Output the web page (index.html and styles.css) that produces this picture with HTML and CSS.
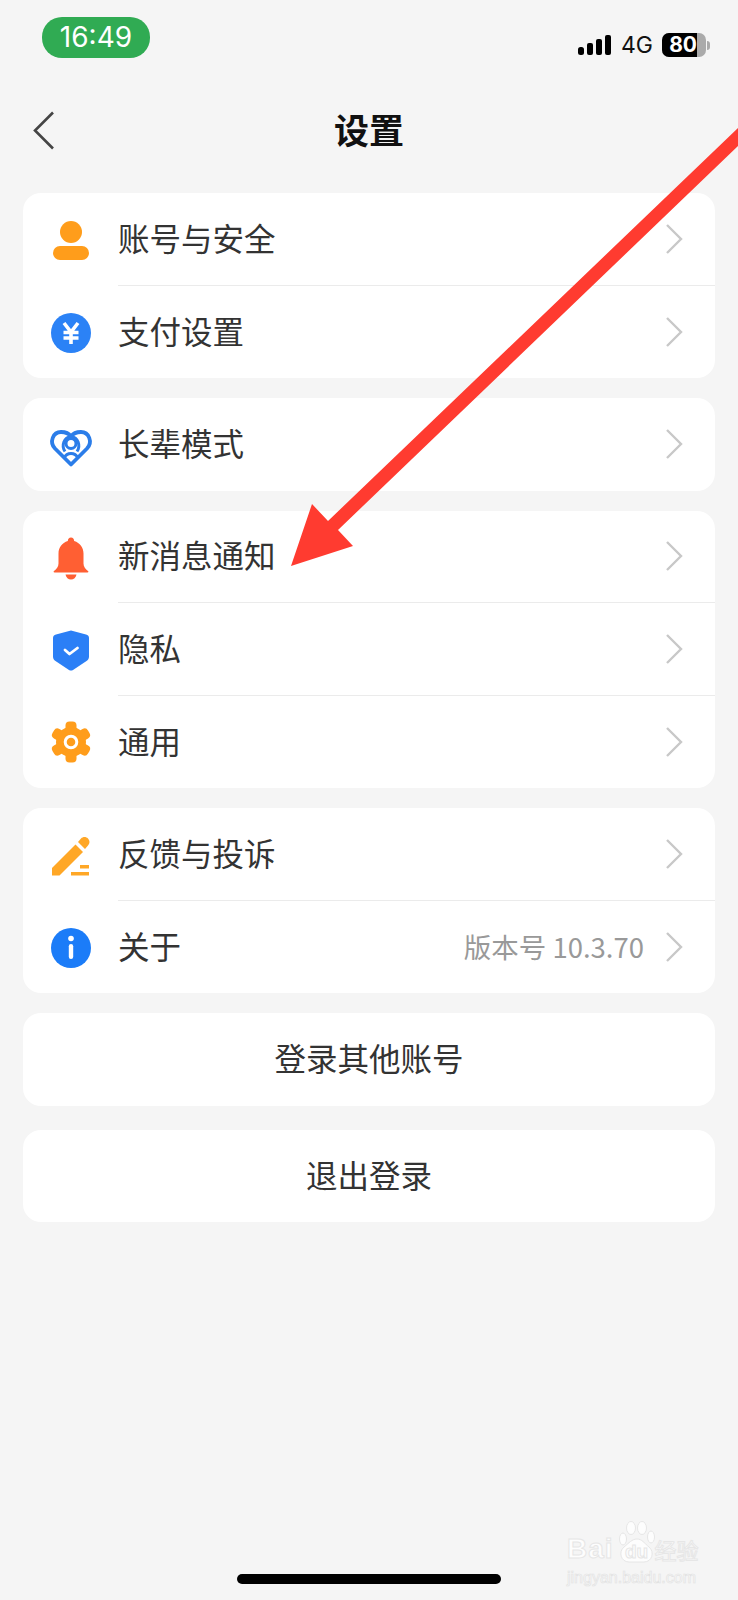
FILE: index.html
```html
<!DOCTYPE html>
<html lang="zh-CN">
<head>
    <meta charset="UTF-8">
    <meta name="viewport" content="width=device-width, initial-scale=1.0">
    <title>设置</title>
    <link rel="stylesheet" href="styles.css">
</head>
<body>

<div class="statusbar">
    <div class="clock">16:49</div>
    <div class="status-right">
        <svg class="signal" width="34" height="20" viewBox="0 0 34 20">
            <rect x="0" y="12" width="6" height="8" rx="2.5"/>
            <rect x="9" y="8" width="6" height="12" rx="2"/>
            <rect x="18" y="4" width="6" height="16" rx="2"/>
            <rect x="27" y="0" width="6" height="20" rx="2"/>
        </svg>
        <span class="net">4G</span>
        <div class="battery">
            <div class="battery-body"><div class="battery-fill">80</div></div>
            <div class="battery-nub"></div>
        </div>
    </div>
</div>

<div class="nav">
    <div class="back">
        <svg width="23" height="39" viewBox="0 0 23 39"><path d="M21 1.5 3 19.5l18 18" fill="none" stroke="#444" stroke-width="2.6"/></svg>
    </div>
    <div class="title">设置</div>
</div>

<div class="content">

    <div class="card">
        <div class="row">
            <svg class="icon" viewBox="0 0 48 48">
                <circle cx="24" cy="17" r="11" fill="#ff9d1b"/>
                <rect x="6" y="31" width="36" height="14" rx="7" fill="#ff9d1b"/>
            </svg>
            <div class="row-body"><span class="label">账号与安全</span><svg class="chev" viewBox="0 0 18 32"><path d="M2 2l14 14L2 30" /></svg></div>
        </div>
        <div class="row">
            <svg class="icon" viewBox="0 0 48 48">
                <circle cx="24" cy="25" r="20" fill="#2b82f6"/>
                <path d="M17 15 24 24l7-9M16.500 24.500h15M16.500 30h15M24 24v12" fill="none" stroke="#fff" stroke-width="3.600"/>
            </svg>
            <div class="row-body"><span class="label">支付设置</span><svg class="chev" viewBox="0 0 18 32"><path d="M2 2l14 14L2 30" /></svg></div>
        </div>
    </div>

    <div class="card">
        <div class="row">
            <svg class="icon" viewBox="0 0 48 48">
                <g fill="none" stroke="#2b7de9" stroke-width="3">
                    <path d="M24 44.500 8 28.500C2 22 6 12 14 12c4.500 0 8 1.500 10 4.500 2-3 5.500-4.500 10-4.500 8 0 12 10 6 16.500z" stroke-width="3.800" stroke-linejoin="round"/>
                    <circle cx="24" cy="23.500" r="5"/>
                    <path d="M24 16.500c-7 1-10 9-6 15M24 16.500c7 1 10 9 6 15M17 38c1.500-3 4-4.500 7-4.500s5.500 1.500 7 4.500"/>
                </g>
            </svg>
            <div class="row-body"><span class="label">长辈模式</span><svg class="chev" viewBox="0 0 18 32"><path d="M2 2l14 14L2 30" /></svg></div>
        </div>
    </div>

    <div class="card">
        <div class="row">
            <svg class="icon" viewBox="0 0 48 48">
                <path d="M24 4.500c2 0 3 1.500 3.200 3.500C33 10 36.500 14.500 36.500 20.500v10c0 3 2 5.500 4.500 7.500.8.700.4 1.500-.5 1.500h-33c-.9 0-1.300-.8-.5-1.500 2.500-2 4.500-4.500 4.500-7.500v-10c0-6 3.500-10.500 9.300-12.500C21 6 22 4.500 24 4.500z" fill="#ff5f33"/>
                <path d="M18.500 41.500h11c-.5 3-2.800 5-5.500 5s-5-2-5.500-5z" fill="#ff5f33"/>
            </svg>
            <div class="row-body"><span class="label">新消息通知</span><svg class="chev" viewBox="0 0 18 32"><path d="M2 2l14 14L2 30" /></svg></div>
        </div>
        <div class="row">
            <svg class="icon" viewBox="0 0 48 48">
                <path d="M24 5.500 39 9.500c2 .5 3 1.500 3 3.500V31.500c0 2-1 3.500-2.500 4.500L26 45c-1.300.8-2.700.8-4 0L8.500 36C7 35 6 33.500 6 31.500V13c0-2 1-3 3-3.500z" fill="#2b7ff6"/>
                <path d="M18 25l4.500 4 8-6" fill="none" stroke="#fff" stroke-width="2.800" stroke-linecap="round" stroke-linejoin="round"/>
            </svg>
            <div class="row-body"><span class="label">隐私</span><svg class="chev" viewBox="0 0 18 32"><path d="M2 2l14 14L2 30" /></svg></div>
        </div>
        <div class="row">
            <svg class="icon" viewBox="0 0 48 48">
                <circle cx="24" cy="24" r="15" fill="#ff9d1b"/>
                <g fill="#ff9d1b">
                    <rect x="18.500" y="3.500" width="11" height="41" rx="4"/>
                    <rect x="18.500" y="3.500" width="11" height="41" rx="4" transform="rotate(60 24 24)"/>
                    <rect x="18.500" y="3.500" width="11" height="41" rx="4" transform="rotate(120 24 24)"/>
                </g>
                <circle cx="24" cy="24" r="5.800" fill="#ff9d1b" stroke="#fff" stroke-width="3"/>
            </svg>
            <div class="row-body"><span class="label">通用</span><svg class="chev" viewBox="0 0 18 32"><path d="M2 2l14 14L2 30" /></svg></div>
        </div>
    </div>

    <div class="card">
        <div class="row">
            <svg class="icon" viewBox="0 0 48 48">
                <path d="M5 45.500V38L28.500 14.500l7.500 7.500L12.500 45.500z" fill="#ffa726"/>
                <path d="M31 12l3-3.500c2-2 5-2 7 0s2 5 0 7l-3 3.500z" fill="#ffa726"/>
                <rect x="33" y="35" width="9" height="3.500" fill="#ffa726"/>
                <rect x="24" y="42" width="18" height="3.500" fill="#ffa726"/>
            </svg>
            <div class="row-body"><span class="label">反馈与投诉</span><svg class="chev" viewBox="0 0 18 32"><path d="M2 2l14 14L2 30" /></svg></div>
        </div>
        <div class="row">
            <svg class="icon" viewBox="0 0 48 48">
                <circle cx="24" cy="25" r="20" fill="#1b7cf8"/>
                <circle cx="24" cy="15.500" r="2.800" fill="#fff"/>
                <rect x="21.800" y="21" width="4.400" height="15" rx="2.200" fill="#fff"/>
            </svg>
            <div class="row-body"><span class="label">关于</span><span class="version">版本号 10.3.70</span><svg class="chev" viewBox="0 0 18 32"><path d="M2 2l14 14L2 30" /></svg></div>
        </div>
    </div>

    <div class="card btn btn-switch">登录其他账号</div>
    <div class="card btn">退出登录</div>

</div>

<div class="home-bar"></div>

<!-- annotation drawn over the screenshot -->
<svg class="arrow" width="738" height="1600" viewBox="0 0 738 1600">
    <polygon points="291,566 312,504 328,521 738,128 738,146 338,530 353,546" fill="#ff3b30"/>
</svg>

<div class="watermark">
    <div class="wm-top">
        <span class="wm-bai">Bai</span>
        <svg class="wm-paw" width="36" height="43" viewBox="0 0 36 43">
            <g fill="#fdfdfd" stroke="#e6e6e6" stroke-width="1">
                <ellipse cx="4" cy="18" rx="3.500" ry="6"/>
                <ellipse cx="12" cy="7" rx="4.500" ry="6.500"/>
                <ellipse cx="23" cy="7" rx="4.500" ry="6.500"/>
                <ellipse cx="32" cy="16" rx="3.500" ry="6"/>
                <path d="M18 18c5 0 7 4 12 8 6 5 3 15-5 15H10C2 41-1 31 5 26c5-4 8-8 13-8z"/>
            </g>
            <text x="17.500" y="37" text-anchor="middle" class="wm-du">du</text>
        </svg>
        <span class="wm-cn">经验</span>
    </div>
    <div class="wm-url">jingyan.baidu.com</div>
</div>

</body>
</html>
```

FILE: styles.css
```css
body{
	margin:0;
	width:738px;
	height:1600px;
	background-color:#f5f5f5;
	color:#333;
	font-family:"Noto Sans CJK SC",sans-serif;
	display:flex;
	flex-direction:column;
	overflow:hidden;
}

/* status bar */
.statusbar{
	height:84px;
	padding:17px 28px 0 42px;
	box-sizing:border-box;
	display:flex;
	justify-content:space-between;
	align-items:flex-start;
}
.clock{
	width:108px;
	height:41px;
	line-height:41px;
	border-radius:20px;
	background-color:#30ab53;
	color:#fff;
	font-family:Inter,sans-serif;
	font-size:28px;
	text-align:center;
}
.status-right{
	display:flex;
	align-items:center;
	margin-top:16px;
	height:24px;
}
.signal{
	fill:#000;
	margin-right:9px;
}
.net{
	font-family:Inter,sans-serif;
	font-size:23px;
	line-height:24px;
	color:#111;
	margin-right:9px;
}
.battery{
	display:flex;
	align-items:center;
}
.battery-body{
	width:44px;
	height:24px;
	border-radius:7px;
	background-color:#aaa;
	overflow:hidden;
}
.battery-fill{
	width:35px;
	height:24px;
	background-color:#000;
	color:#fff;
	font-family:Inter,sans-serif;
	font-weight:700;
	font-size:21px;
	line-height:24px;
	text-align:right;
}
.battery-nub{
	width:3px;
	height:9px;
	margin-left:1px;
	border-radius:0 3px 3px 0;
	background-color:#aaa;
}

/* nav */
.nav{
	height:94px;
	display:grid;
	grid-template-columns:1fr auto 1fr;
	align-items:center;
}
.back{
	padding-left:32px;
	height:39px;
	margin-bottom:2px;
}
.title{
	font-size:35px;
	font-weight:700;
	color:#111;
	padding-bottom:6px;
}

/* list */
.content{
	padding:15px 23px 0 23px;
}
.card{
	background-color:#fff;
	border-radius:18px;
	margin-bottom:20px;
}
.row{
	display:flex;
	align-items:center;
	padding-left:24px;
}
.icon{
	width:48px;
	height:48px;
	margin-right:23px;
	flex-shrink:0;
}
.row-body{
	flex:1;
	height:92.5px;
	box-sizing:border-box;
	display:flex;
	align-items:center;
	padding-right:32px;
	border-bottom:1px solid #ebebeb;
}
.row:last-child .row-body{
	border-bottom:none;
}
.label{
	flex:1;
	font-size:31.500px;
	padding-bottom:4px;
}
.version{
	font-size:27.500px;
	color:#999;
	margin-right:21px;
	padding-bottom:2px;
}
.chev{
	width:18px;
	height:32px;
	fill:none;
	stroke:#c8c8c8;
	stroke-width:2.4;
}

/* buttons */
.btn{
	height:92.500px;
	line-height:88px;
	text-align:center;
	font-size:31.500px;
}
.btn-switch{
	margin-bottom:24px;
}

.home-bar{
	width:264px;
	height:10px;
	margin:auto 0 16px 237px;
	border-radius:5px;
	background-color:#000;
}

/* overlays */
.arrow{
	position:absolute;
	left:0;
	top:0;
}
.watermark{
	position:absolute;
	left:567px;
	top:1520px;
	width:134px;
}
.wm-top{
	display:flex;
	align-items:flex-end;
	height:44px;
}
.wm-bai{
	font-family:"Liberation Sans",sans-serif;
	font-weight:700;
	font-size:28px;
	line-height:30px;
	letter-spacing:1px;
	color:#fdfdfd;
	-webkit-text-stroke:1px #e6e6e6;
}
.wm-paw{
	margin-left:5px;
	flex-shrink:0;
}
.wm-du{
	font-family:"Liberation Sans",sans-serif;
	font-weight:700;
	font-size:19px;
	fill:#fdfdfd;
	stroke:#e6e6e6;
	stroke-width:1;
}
.wm-cn{
	font-size:22px;
	line-height:30px;
	color:#fdfdfd;
	-webkit-text-stroke:1px #e6e6e6;
	white-space:nowrap;
}
.wm-url{
	font-family:"Liberation Sans",sans-serif;
	font-size:16px;
	line-height:20px;
	margin-top:4px;
	color:#fdfdfd;
	-webkit-text-stroke:.7px #e2e2e2;
	white-space:nowrap;
}
```
